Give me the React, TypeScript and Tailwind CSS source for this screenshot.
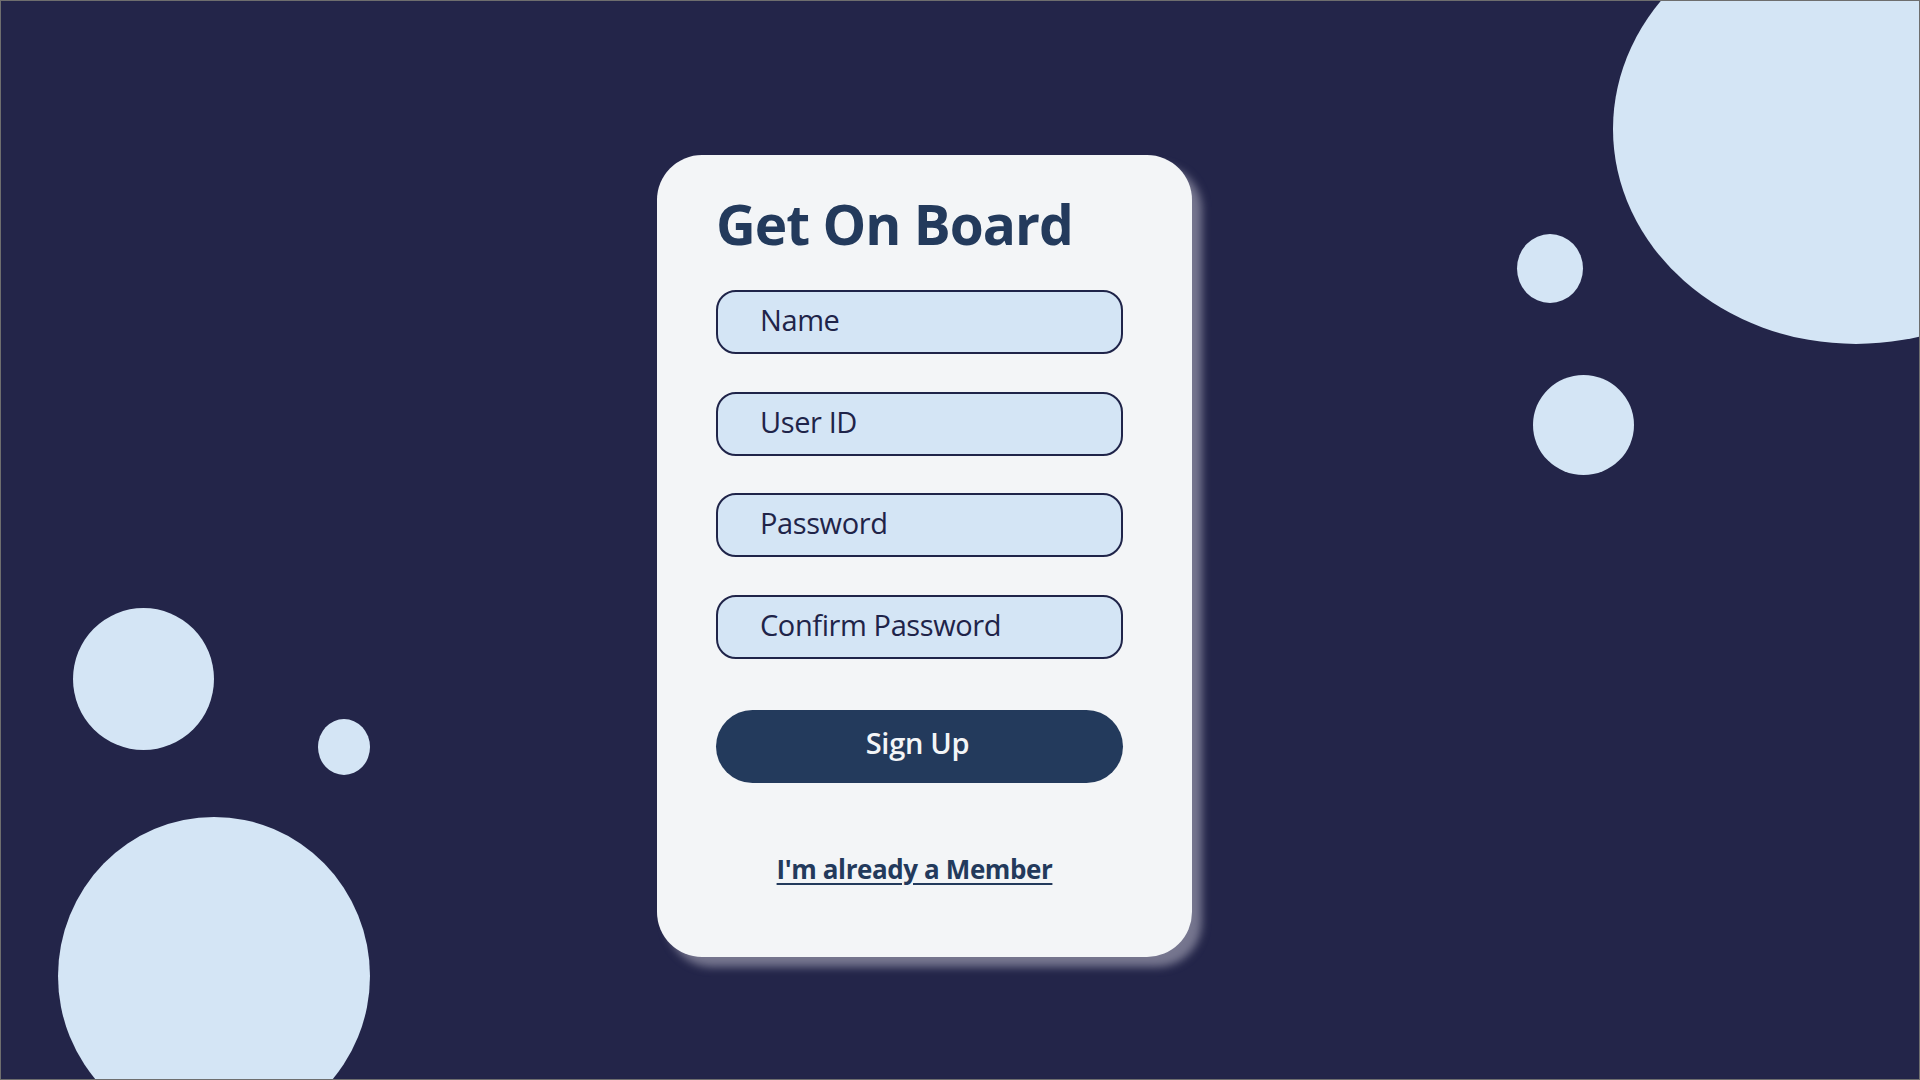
import React from "react";

const font = { fontFamily: '"Open Sans", "Noto Sans", sans-serif' };

function Field({ label, className = "" }: { label: string; className?: string }) {
  return (
    <div
      className={`flex h-[64px] w-full items-center rounded-[20px] border-2 border-[#1f2449] bg-[#d4e5f5] pl-[42px] ${className}`}
    >
      <span className="pb-[5px] text-[29px] font-medium leading-none tracking-[-0.4px] text-[#1f2449]">{label}</span>
    </div>
  );
}

export default function App() {
  return (
    <div
      className="relative h-screen w-screen overflow-hidden border border-[#6e6e6e] bg-[#232549]"
      style={font}
    >
      {/* decorative bubbles */}
      <div className="absolute left-[1612px] top-[-87px] h-[430px] w-[486px] rounded-[50%] bg-[#d4e5f5]" />
      <div className="absolute left-[1516px] top-[233px] h-[69px] w-[66px] rounded-[50%] bg-[#d4e5f5]" />
      <div className="absolute left-[1532px] top-[374px] h-[100px] w-[101px] rounded-[50%] bg-[#d4e5f5]" />
      <div className="absolute left-[72px] top-[607px] h-[142px] w-[141px] rounded-[50%] bg-[#d4e5f5]" />
      <div className="absolute left-[317px] top-[718px] h-[56px] w-[52px] rounded-[50%] bg-[#d4e5f5]" />
      <div className="absolute left-[57px] top-[816px] h-[318px] w-[312px] rounded-[50%] bg-[#d4e5f5]" />

      <div className="relative flex justify-center pt-[154px]">
        <div className="mr-[71px] flex h-[802px] w-[535px] flex-col rounded-[45px] bg-[#f3f5f7] pl-[59px] pr-[69px] pt-[35px] shadow-[10px_10px_9px_#76768f]">
          <h1 className="text-[55px] font-bold leading-[67px] tracking-[-1px] text-[#233a5c]">
            Get On Board
          </h1>
          <div className="mt-[33px] flex flex-col">
            <Field label="Name" />
            <Field label="User ID" className="mt-[38px]" />
            <Field label="Password" className="mt-[37px]" />
            <Field label="Confirm Password" className="mt-[38px]" />
          </div>
          <button className="mt-[51px] flex h-[73px] w-full items-center justify-center rounded-full bg-[#233a5c] pb-[7px] pr-[4px] text-[29px] font-semibold tracking-[-0.3px] text-[#f3f5f7]">
            Sign Up
          </button>
          <div className="mt-[67px] pr-[10px] text-center">
            <a className="text-[26px] font-bold tracking-[-0.4px] text-[#233a5c] underline decoration-2 underline-offset-[4px]">
              I'm already a Member
            </a>
          </div>
        </div>
      </div>
    </div>
  );
}
